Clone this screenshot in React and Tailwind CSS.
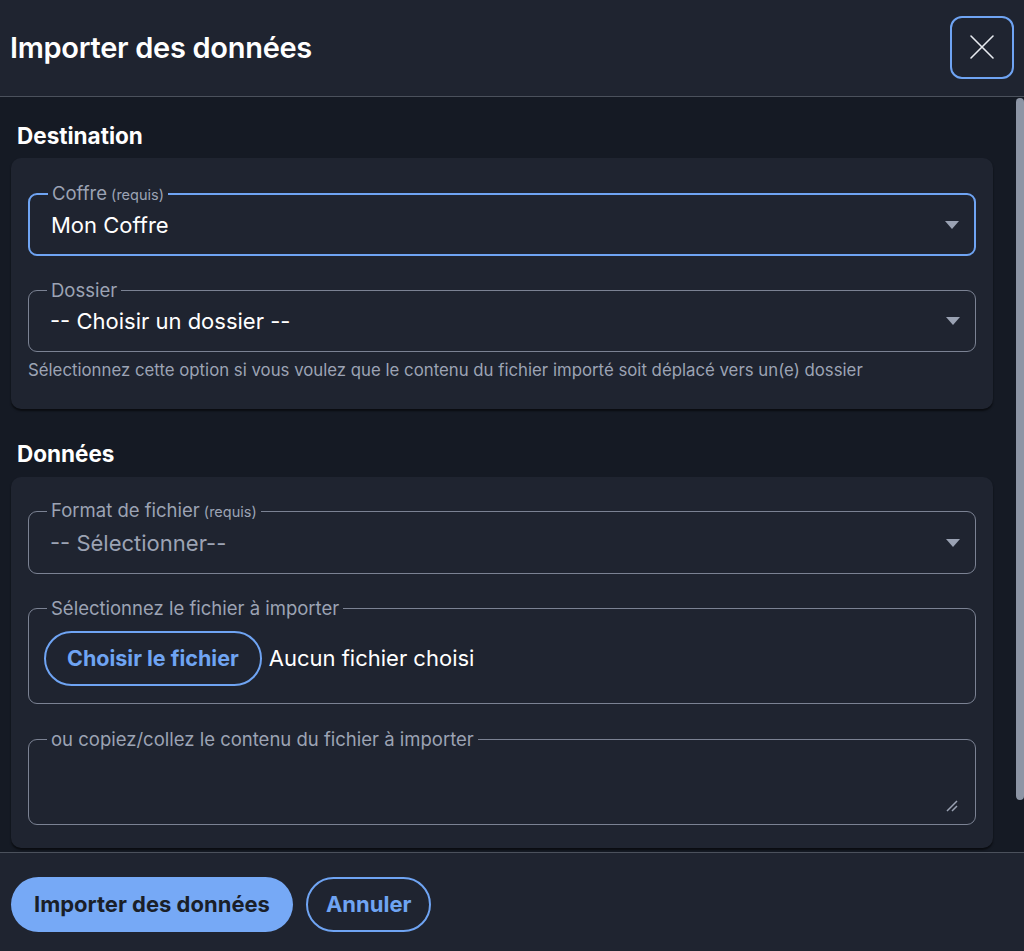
import React from 'react';

const font = { fontFamily: 'Inter, "Noto Sans", sans-serif' };

const Caret = () => (
    <svg width="14" height="8" viewBox="0 0 14 8" className="shrink-0">
        <polygon points="0,0 14,0 7,8" fill="#9aa2b3" />
    </svg>
);

const Field = ({ label, required, focused, children, className = '' }) => (
    <fieldset
        className={`relative rounded-[9px] px-0 ${focused ? 'border-2 border-[#6fa4f3]' : 'border-[1.5px] border-[#7b8293]'} ${className}`}
    >
        <legend className="ml-[18px] px-[4px] text-[18.5px] leading-[22px] text-[#9ca3b4]">
            {label}
            {required && <span className="text-[14.5px]"> (requis)</span>}
        </legend>
        {children}
    </fieldset>
);

const SelectField = ({ label, required, focused, value, muted, className }) => (
    <Field label={label} required={required} focused={focused} className={className}>
        <div className={`flex items-center justify-between ${focused ? 'h-[48px]' : 'h-[50px]'} pb-[10px] pl-[21px] pr-[15px]`}>
            <span className={`text-[22px] leading-[28px] ${muted ? 'text-[#9ca3b4]' : 'text-white'}`}>{value}</span>
            <Caret />
        </div>
    </Field>
);

const App = () => {
    return (
        <div style={font} className="h-[951px] w-full flex flex-col bg-[#151a24] overflow-hidden">
            {/* Header */}
            <div className="h-[97px] shrink-0 flex items-center justify-between pl-[10px] pr-[10px] bg-[#1f2430] border-b border-[#4b515c]">
                <h1 className="text-[29px] font-semibold text-white tracking-[-0.01em]">Importer des données</h1>
                <button className="w-[64px] h-[63px] mt-[-2px] flex items-center justify-center rounded-[12px] border-2 border-[#6fa4f3]">
                    <svg width="26" height="26" viewBox="0 0 26 26" fill="none" stroke="#e8ebf0" strokeWidth="1.6" strokeLinecap="round">
                        <path d="M2 2 L24 24 M24 2 L2 24" />
                    </svg>
                </button>
            </div>

            {/* Body */}
            <div className="relative flex-1 overflow-hidden pl-[11px] pr-[31px] pt-[25px]">
                <h2 className="pl-[6px] text-[22.5px] leading-[28px] font-bold text-white mb-[8px]">Destination</h2>
                <div className="rounded-[10px] bg-[#1f2430] px-[17px] pt-[24px] pb-[29px] shadow-[0_2px_2px_rgba(0,0,0,0.55)]">
                    <SelectField label="Coffre" required focused value="Mon Coffre" />
                    <SelectField label="Dossier" value="-- Choisir un dossier --" className="mt-[23px]" />
                    <p className="mt-[8px] text-[16.8px] leading-[20px] text-[#9ca3b4]">
                        Sélectionnez cette option si vous voulez que le contenu du fichier importé soit déplacé vers un(e) dossier
                    </p>
                </div>

                <h2 className="mt-[31px] pl-[6px] text-[22.5px] leading-[28px] font-bold text-white mb-[9px]">Données</h2>
                <div className="rounded-[10px] bg-[#1f2430] px-[17px] pt-[22px] pb-[23px] shadow-[0_2px_2px_rgba(0,0,0,0.55)]">
                    <SelectField label="Format de fichier" required value="-- Sélectionner--" muted />

                    <Field label="Sélectionnez le fichier à importer" className="mt-[23px]">
                        <div className="flex items-center h-[84px] pb-[5px] pl-[15px]">
                            <button className="h-[55px] px-[21px] rounded-full border-2 border-[#6fa4f3] text-[21.5px] font-bold text-[#6fa4f3]">
                                Choisir le fichier
                            </button>
                            <span className="ml-[7px] text-[22px] text-white">Aucun fichier choisi</span>
                        </div>
                    </Field>

                    <Field label="ou copiez/collez le contenu du fichier à importer" className="mt-[24px]">
                        <textarea className="block w-full h-[74px] resize-none bg-transparent outline-none px-[21px] text-white text-[18px]" />
                        <svg width="12" height="12" viewBox="0 0 12 12" className="absolute right-[17px] bottom-[12px]" stroke="#9aa2b3" strokeWidth="1.5">
                            <path d="M1 11 L11 1 M6 11 L11 6" />
                        </svg>
                    </Field>
                </div>

                {/* scrollbar thumb */}
                <div className="absolute right-0 top-[1px] w-[8px] h-[702px] rounded-full bg-[#8d95a5]" />
            </div>

            {/* Footer */}
            <div className="shrink-0 h-[99px] flex items-start gap-[13px] pl-[11px] pt-[24px] bg-[#1f2430] border-t border-[#4b515c]">
                <button className="h-[55px] px-[23px] rounded-full bg-[#76a9f6] text-[22px] font-bold text-[#1a1f29]">
                    Importer des données
                </button>
                <button className="h-[55px] px-[18px] rounded-full border-2 border-[#6fa4f3] text-[22px] font-bold text-[#6fa4f3]">
                    Annuler
                </button>
            </div>
        </div>
    );
};

export default App;
